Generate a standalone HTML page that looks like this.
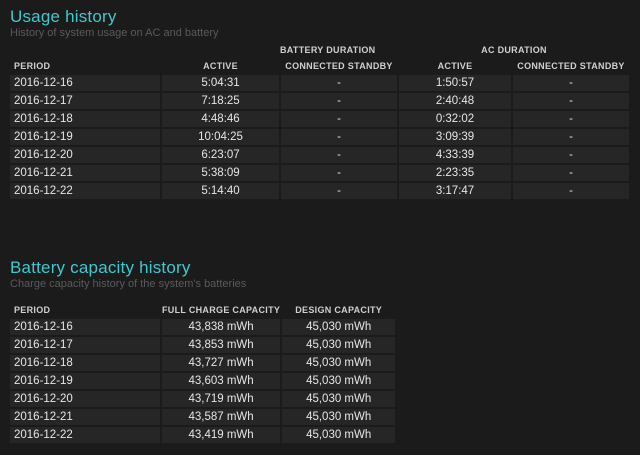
<!DOCTYPE html>
<html><head><meta charset="utf-8"><style>
body{margin:0;background:#1b1b1b;width:640px;height:455px;overflow:hidden;font-family:"Liberation Sans",sans-serif;color:#e6e6e6;position:relative}
.t{position:absolute;left:10px;color:#3fc9cc;font-size:17px;letter-spacing:0.2px}
.s{position:absolute;left:10px;color:#5a5a5a;font-size:11px}
table{position:absolute;left:8px;border-collapse:separate;border-spacing:2px;}
td{height:16px;padding:0;font-size:11.5px;text-align:center;background:#262626;line-height:16px;white-space:nowrap}
td.p{text-align:left;padding-left:4px}
th{font-size:9px;color:#d0d0d0;font-weight:bold;height:14px;padding:0;letter-spacing:0.3px;text-align:center;background:none;white-space:nowrap}
th.p{text-align:left;padding-left:4px}
</style></head><body>
<div class="t" style="top:7px">Usage history</div>
<div class="s" style="top:27px">History of system usage on AC and battery</div>
<table style="top:41px">
<tr><th></th><th colspan="2" style="padding-left:118px;text-align:left">BATTERY DURATION</th><th colspan="2">AC DURATION</th></tr>
<tr><th class="p" style="width:146px">PERIOD</th><th style="width:117px">ACTIVE</th><th style="width:116px">CONNECTED STANDBY</th><th style="width:112px">ACTIVE</th><th style="width:116px">CONNECTED STANDBY</th></tr>
<tr><td class="p">2016-12-16</td><td>5:04:31</td><td>-</td><td>1:50:57</td><td>-</td></tr>
<tr><td class="p">2016-12-17</td><td>7:18:25</td><td>-</td><td>2:40:48</td><td>-</td></tr>
<tr><td class="p">2016-12-18</td><td>4:48:46</td><td>-</td><td>0:32:02</td><td>-</td></tr>
<tr><td class="p">2016-12-19</td><td>10:04:25</td><td>-</td><td>3:09:39</td><td>-</td></tr>
<tr><td class="p">2016-12-20</td><td>6:23:07</td><td>-</td><td>4:33:39</td><td>-</td></tr>
<tr><td class="p">2016-12-21</td><td>5:38:09</td><td>-</td><td>2:23:35</td><td>-</td></tr>
<tr><td class="p">2016-12-22</td><td>5:14:40</td><td>-</td><td>3:17:47</td><td>-</td></tr>
</table>
<div class="t" style="top:258px">Battery capacity history</div>
<div class="s" style="top:278px">Charge capacity history of the system's batteries</div>
<table style="top:301px">
<tr><th class="p" style="width:146px">PERIOD</th><th style="width:117px">FULL CHARGE CAPACITY</th><th style="width:113px">DESIGN CAPACITY</th></tr>
<tr><td class="p">2016-12-16</td><td>43,838 mWh</td><td>45,030 mWh</td></tr>
<tr><td class="p">2016-12-17</td><td>43,853 mWh</td><td>45,030 mWh</td></tr>
<tr><td class="p">2016-12-18</td><td>43,727 mWh</td><td>45,030 mWh</td></tr>
<tr><td class="p">2016-12-19</td><td>43,603 mWh</td><td>45,030 mWh</td></tr>
<tr><td class="p">2016-12-20</td><td>43,719 mWh</td><td>45,030 mWh</td></tr>
<tr><td class="p">2016-12-21</td><td>43,587 mWh</td><td>45,030 mWh</td></tr>
<tr><td class="p">2016-12-22</td><td>43,419 mWh</td><td>45,030 mWh</td></tr>
</table>
</body></html>
